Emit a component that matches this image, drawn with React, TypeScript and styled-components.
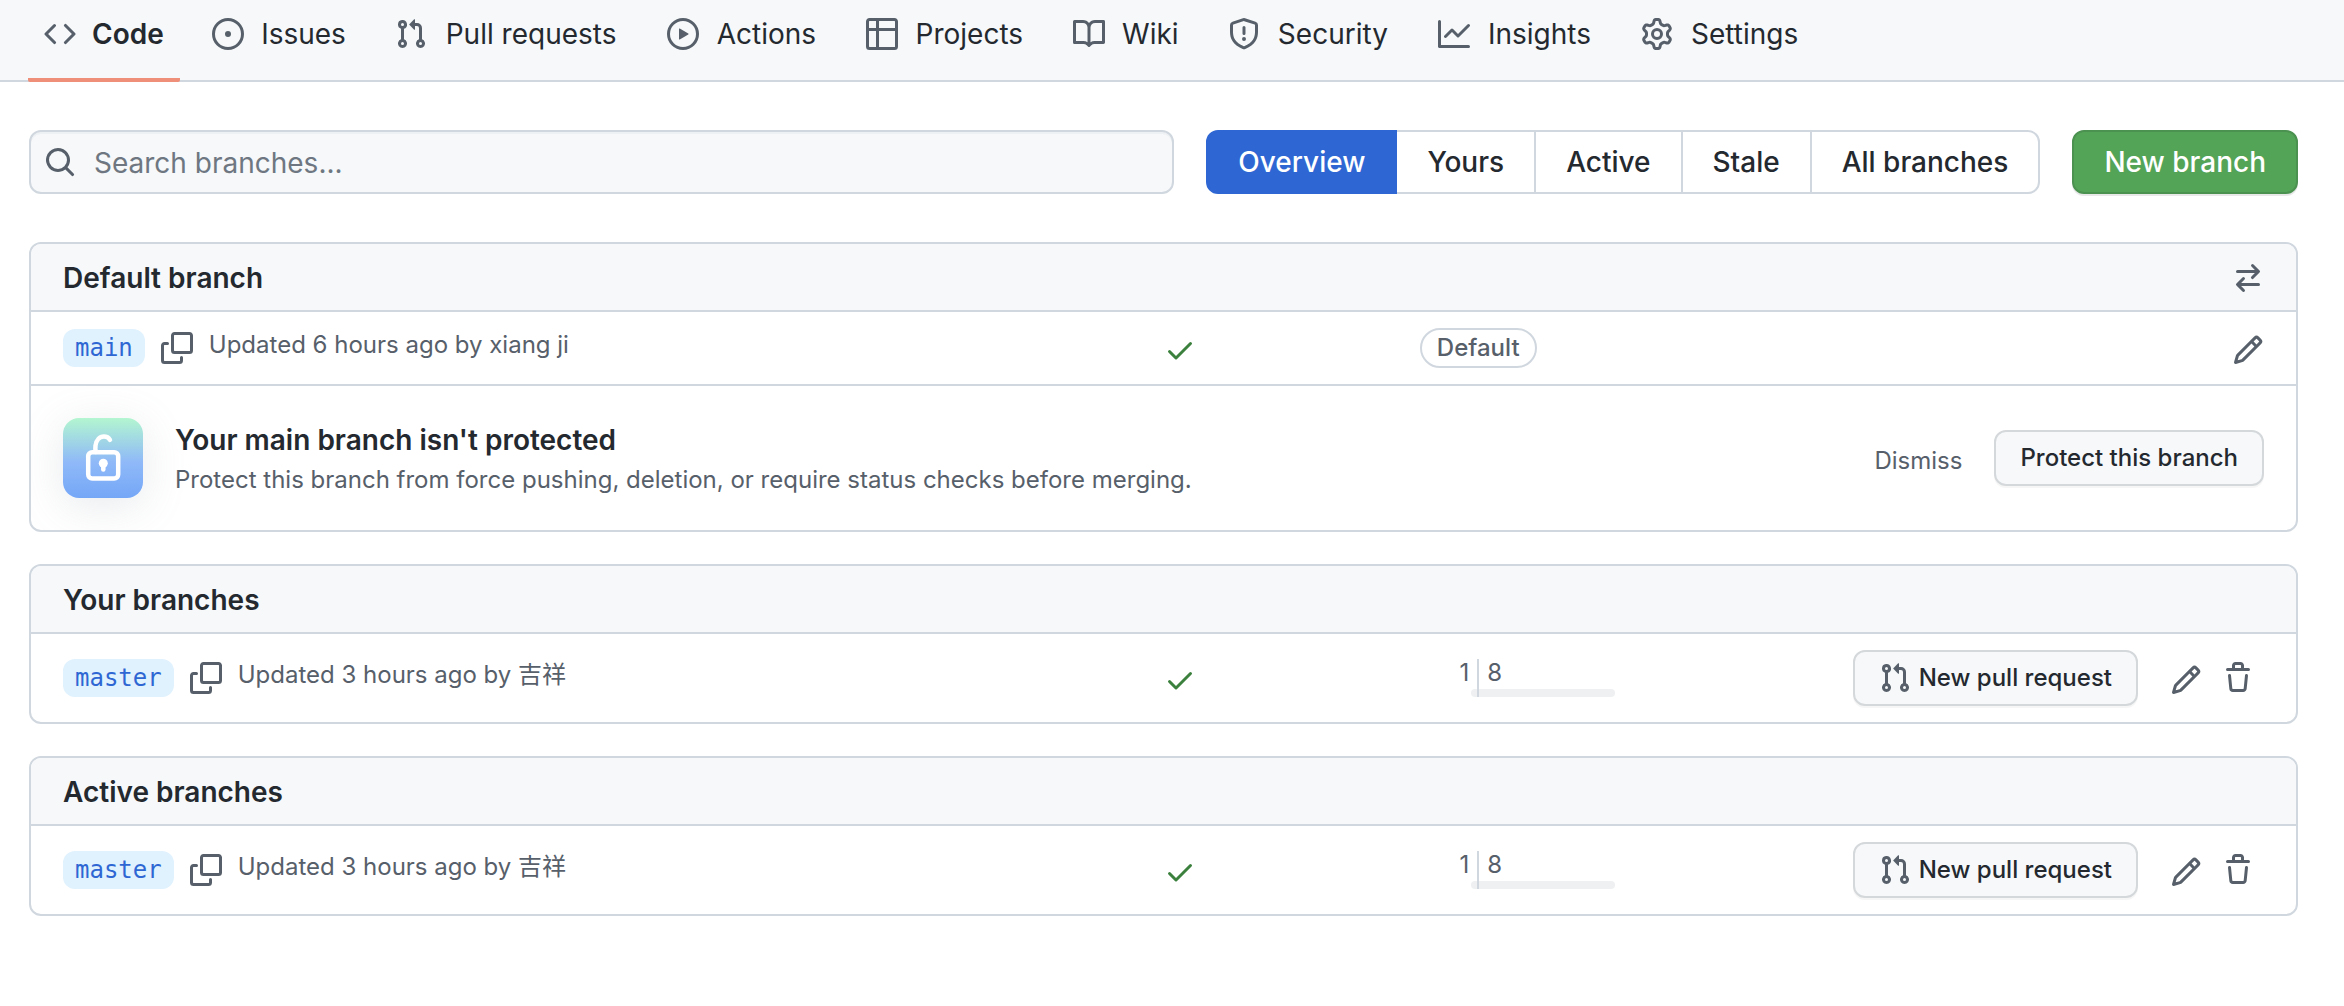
import React from "react";
import styled, { createGlobalStyle, css } from "styled-components";

const color = {
  fg: "#24292f",
  muted: "#57606a",
  border: "#d0d7de",
  subtle: "#f6f8fa",
  blue: "#2e67d3",
  green: "#54a457",
  check: "#3b803d",
};

const GlobalStyle = createGlobalStyle`
  *, *::before, *::after { box-sizing: border-box; }
  body {
    margin: 0;
    background: #fff;
    color: ${color.fg};
    font-family: Inter, "Noto Sans CJK SC", sans-serif;
    font-size: 24px;
    line-height: 36px;
  }
  button, input { font: inherit; color: inherit; margin: 0; }
`;

const paths = {
  code: "M4.72 3.22a.75.75 0 011.06 1.06L2.06 8l3.72 3.72a.75.75 0 11-1.06 1.06L.47 8.53a.75.75 0 010-1.06l4.25-4.25zm6.56 0a.75.75 0 10-1.06 1.06L13.94 8l-3.72 3.72a.75.75 0 101.06 1.06l4.25-4.25a.75.75 0 000-1.06l-4.25-4.25z",
  issue: "M8 9.5a1.5 1.5 0 100-3 1.5 1.5 0 000 3zM8 0a8 8 0 100 16A8 8 0 008 0zM1.5 8a6.5 6.5 0 1113 0 6.5 6.5 0 01-13 0z",
  pull: "M7.177 3.073L9.573.677A.25.25 0 0110 .854v4.792a.25.25 0 01-.427.177L7.177 3.427a.25.25 0 010-.354zM3.75 2.5a.75.75 0 100 1.5.75.75 0 000-1.5zm-2.25.75a2.25 2.25 0 113 2.122v5.256a2.251 2.251 0 11-1.5 0V5.372A2.25 2.25 0 011.5 3.25zM11 2.5h-1V4h1a1 1 0 011 1v5.628a2.251 2.251 0 101.5 0V5A2.5 2.5 0 0011 2.5zm1 10.25a.75.75 0 111.5 0 .75.75 0 01-1.5 0zM3.75 12a.75.75 0 100 1.5.75.75 0 000-1.5z",
  play: "M1.5 8a6.5 6.5 0 1113 0 6.5 6.5 0 01-13 0zM8 0a8 8 0 100 16A8 8 0 008 0zM6.379 5.227A.25.25 0 006 5.442v5.117a.25.25 0 00.379.214l4.264-2.559a.25.25 0 000-.428L6.379 5.227z",
  table: "M0 1.75C0 .784.784 0 1.75 0h12.5C15.216 0 16 .784 16 1.75v12.5A1.75 1.75 0 0114.25 16H1.75A1.75 1.75 0 010 14.25V1.75zM1.5 6.5v7.75c0 .138.112.25.25.25H5v-8H1.5zM5 5H1.5V1.75a.25.25 0 01.25-.25H5V5zm1.5 1.5v8h7.75a.25.25 0 00.25-.25V6.5h-8zm8-1.5h-8V1.5h7.75a.25.25 0 01.25.25V5z",
  book: "M0 1.75A.75.75 0 01.75 1h4.253c1.227 0 2.317.59 3 1.501A3.744 3.744 0 0111.006 1h4.245a.75.75 0 01.75.75v10.5a.75.75 0 01-.75.75h-4.507a2.25 2.25 0 00-1.591.659l-.622.621a.75.75 0 01-1.06 0l-.622-.621A2.25 2.25 0 005.258 13H.75a.75.75 0 01-.75-.75V1.75zm8.755 3a2.25 2.25 0 012.25-2.25H14.5v9h-3.757c-.71 0-1.4.201-1.992.572l.004-7.322zm-1.504 7.324l.004-5.073-.002-2.253A2.25 2.25 0 005.003 2.5H1.5v9h3.757a3.75 3.75 0 011.994.574z",
  shield: "M7.467.133a1.75 1.75 0 011.066 0l5.25 1.68A1.75 1.75 0 0115 3.48V7c0 1.566-.32 3.182-1.303 4.682-.983 1.498-2.585 2.813-5.032 3.855a1.7 1.7 0 01-1.33 0c-2.447-1.042-4.049-2.357-5.032-3.855C1.32 10.182 1 8.566 1 7V3.48a1.75 1.75 0 011.217-1.667l5.25-1.68zm.61 1.429a.25.25 0 00-.153 0l-5.25 1.68a.25.25 0 00-.174.238V7c0 1.358.275 2.666 1.057 3.86.784 1.194 2.121 2.34 4.366 3.297a.2.2 0 00.154 0c2.245-.956 3.582-2.104 4.366-3.298C13.225 9.666 13.5 8.36 13.5 7V3.48a.25.25 0 00-.174-.237l-5.25-1.68zM9 10.5a1 1 0 11-2 0 1 1 0 012 0zm-.25-5.75a.75.75 0 10-1.5 0v3a.75.75 0 001.5 0v-3z",
  graph: "M1.5 1.75a.75.75 0 00-1.5 0v12.5c0 .414.336.75.75.75h14.5a.75.75 0 000-1.5H1.5V1.75zm14.28 2.53a.75.75 0 00-1.06-1.06L10 7.94 7.53 5.47a.75.75 0 00-1.06 0L3.22 8.72a.75.75 0 001.06 1.06L7 7.06l2.47 2.47a.75.75 0 001.06 0l5.25-5.25z",
  gear: "M7.429 1.525a6.593 6.593 0 011.142 0c.036.003.108.036.137.146l.289 1.105c.147.56.55.967.997 1.189.174.086.341.183.501.29.417.278.97.423 1.53.27l1.102-.303c.11-.03.175.016.195.046.219.31.41.641.573.989.014.031.022.11-.059.19l-.815.806c-.411.406-.562.957-.53 1.456a4.588 4.588 0 010 .582c-.032.499.119 1.05.53 1.456l.815.806c.08.08.073.159.059.19a6.494 6.494 0 01-.573.99c-.02.029-.086.074-.195.045l-1.103-.303c-.559-.153-1.112-.008-1.529.27-.16.107-.327.204-.5.29-.449.222-.851.628-.998 1.189l-.289 1.105c-.029.11-.101.143-.137.146a6.613 6.613 0 01-1.142 0c-.036-.003-.108-.037-.137-.146l-.289-1.105c-.147-.56-.55-.967-.997-1.189a4.502 4.502 0 01-.501-.29c-.417-.278-.97-.423-1.53-.27l-1.102.303c-.11.03-.175-.016-.195-.046a6.492 6.492 0 01-.573-.989c-.014-.031-.022-.11.059-.19l.815-.806c.411-.406.562-.957.53-1.456a4.587 4.587 0 010-.582c.032-.499-.119-1.05-.53-1.456l-.815-.806c-.08-.08-.073-.159-.059-.19a6.44 6.44 0 01.573-.99c.02-.029.086-.075.195-.045l1.103.303c.559.153 1.112.008 1.529-.27.16-.107.327-.204.5-.29.449-.222.851-.628.998-1.189l.289-1.105c.029-.11.101-.143.137-.146zM8 0c-.236 0-.47.01-.701.03-.743.065-1.29.615-1.458 1.261l-.29 1.106c-.017.066-.078.158-.211.224a5.994 5.994 0 00-.668.386c-.123.082-.233.09-.3.071L3.27 2.776c-.644-.177-1.392.02-1.82.63a7.977 7.977 0 00-.704 1.217c-.315.675-.111 1.422.363 1.891l.815.806c.05.048.098.147.088.294a6.084 6.084 0 000 .772c.01.147-.038.246-.088.294l-.815.806c-.474.469-.678 1.216-.363 1.891.2.428.436.835.704 1.218.428.609 1.176.806 1.82.63l1.103-.303c.066-.019.176-.011.299.071.213.143.436.272.668.386.133.066.194.158.212.224l.289 1.106c.169.646.715 1.196 1.458 1.26a8.094 8.094 0 001.402 0c.743-.064 1.29-.614 1.458-1.26l.29-1.106c.017-.066.078-.158.211-.224a5.98 5.98 0 00.668-.386c.123-.082.233-.09.3-.071l1.102.302c.644.177 1.392-.02 1.82-.63.268-.382.505-.789.704-1.217.315-.675.111-1.422-.364-1.891l-.814-.806c-.05-.048-.098-.147-.088-.294a6.1 6.1 0 000-.772c-.01-.147.039-.246.088-.294l.814-.806c.475-.469.679-1.216.364-1.891a7.992 7.992 0 00-.704-1.218c-.428-.609-1.176-.806-1.82-.63l-1.103.303c-.066.019-.176.011-.299-.071a5.991 5.991 0 00-.668-.386c-.133-.066-.194-.158-.212-.224L10.16 1.29C9.99.645 9.444.095 8.701.031A8.094 8.094 0 008 0zm1.5 8a1.5 1.5 0 11-3 0 1.5 1.5 0 013 0zM11 8a3 3 0 11-6 0 3 3 0 016 0z",
  search: "M11.5 7a4.499 4.499 0 11-8.998 0A4.499 4.499 0 0111.5 7zm-.82 4.74a6 6 0 111.06-1.06l3.04 3.04a.75.75 0 11-1.06 1.06l-3.04-3.04z",
  copy: "M0 6.75C0 5.784.784 5 1.75 5h1.5a.75.75 0 010 1.5h-1.5a.25.25 0 00-.25.25v7.5c0 .138.112.25.25.25h7.5a.25.25 0 00.25-.25v-1.5a.75.75 0 011.5 0v1.5A1.75 1.75 0 019.25 16h-7.5A1.75 1.75 0 010 14.25v-7.5zM5 1.75C5 .784 5.784 0 6.75 0h7.5C15.216 0 16 .784 16 1.75v7.5A1.75 1.75 0 0114.25 11h-7.5A1.75 1.75 0 015 9.25v-7.5zm1.75-.25a.25.25 0 00-.25.25v7.5c0 .138.112.25.25.25h7.5a.25.25 0 00.25-.25v-7.5a.25.25 0 00-.25-.25h-7.5z",
  swap: "M5.22 14.78a.75.75 0 001.06-1.06L4.56 12h8.69a.75.75 0 000-1.5H4.56l1.72-1.72a.75.75 0 00-1.06-1.06l-3 3a.75.75 0 000 1.06l3 3zm5.56-6.5a.75.75 0 11-1.06-1.06l1.72-1.72H2.75a.75.75 0 010-1.5h8.69L9.72 2.28a.75.75 0 011.06-1.06l3 3a.75.75 0 010 1.06l-3 3z",
  pencil: "M11.013 1.427a1.75 1.75 0 012.474 0l1.086 1.086a1.75 1.75 0 010 2.474l-8.61 8.61c-.21.21-.47.364-.756.445l-3.251.93a.75.75 0 01-.927-.928l.929-3.25a1.75 1.75 0 01.445-.758l8.61-8.61zm1.414 1.06a.25.25 0 00-.354 0L10.811 3.75l1.439 1.44 1.263-1.263a.25.25 0 000-.354l-1.086-1.086zM11.189 6.25L9.75 4.81l-6.286 6.287a.25.25 0 00-.064.108l-.558 1.953 1.953-.558a.249.249 0 00.108-.064l6.286-6.286z",
  trash: "M6.5 1.75a.25.25 0 01.25-.25h2.5a.25.25 0 01.25.25V3h-3V1.75zm4.5 0V3h2.25a.75.75 0 010 1.5H2.75a.75.75 0 010-1.5H5V1.75C5 .784 5.784 0 6.75 0h2.5C10.216 0 11 .784 11 1.75zM4.496 6.675a.75.75 0 10-1.492.15l.66 6.6A1.75 1.75 0 005.405 15h5.19c.9 0 1.652-.681 1.741-1.576l.66-6.6a.75.75 0 00-1.492-.149l-.66 6.6a.25.25 0 01-.249.225h-5.19a.25.25 0 01-.249-.225l-.66-6.6z",
  check: "M13.78 4.22a.75.75 0 010 1.06l-7.25 7.25a.75.75 0 01-1.06 0L2.22 9.28a.75.75 0 011.06-1.06L6 10.94l6.72-6.72a.75.75 0 011.06 0z",
};

type IconName = keyof typeof paths;

const Svg = styled.svg`
  display: block;
  flex: none;
  width: 32px;
  height: 32px;
  fill: currentColor;
`;

const Icon = ({ name }: { name: IconName }) => (
  <Svg viewBox="0 0 16 16" aria-hidden="true">
    <path fillRule="evenodd" d={paths[name]} />
  </Svg>
);

const Nav = styled.nav`
  background: ${color.subtle};
  box-shadow: inset 0 -2px 0 ${color.border};
  padding: 0 28px;
`;

const Tabs = styled.ul`
  display: flex;
  gap: 16px;
  margin: 0;
  padding: 0;
  list-style: none;
`;

const Tab = styled.a<{ $selected?: boolean }>`
  display: flex;
  align-items: center;
  gap: 16px;
  padding: 14px 16px 24px;
  border-bottom: 4px solid ${(p) => (p.$selected ? "#ef8f79" : "transparent")};
  border-radius: 2px;
  color: ${color.muted};
  font-size: 28px;
  line-height: 40px;
  text-decoration: none;
`;

/* The hidden bold copy keeps a tab's width the same when it is selected. */
const TabLabel = styled.span<{ $selected?: boolean }>`
  display: grid;
  justify-items: center;
  color: ${color.fg};
  font-weight: ${(p) => (p.$selected ? 600 : 400)};
  &::after {
    content: attr(data-content);
    height: 0;
    overflow: hidden;
    visibility: hidden;
    font-weight: 600;
  }
`;

const Page = styled.main`
  display: flex;
  flex-direction: column;
  gap: 32px;
  padding: 48px 46px 48px 29px;
`;

const Toolbar = styled.div`
  display: flex;
  gap: 32px;
  margin-bottom: 16px;
`;

const SearchBox = styled.label`
  display: flex;
  flex: 1;
  align-items: center;
  gap: 18px;
  height: 64px;
  padding: 0 13px;
  border: 2px solid ${color.border};
  border-radius: 12px;
  background: ${color.subtle};
  box-shadow: inset 0 2px 0 rgba(208, 215, 222, 0.2);
  color: ${color.muted};
`;

const SearchInput = styled.input`
  flex: 1;
  min-width: 0;
  padding: 2px 0 0;
  border: 0;
  outline: 0;
  background: transparent;
  color: ${color.fg};
  font-size: 28px;
  line-height: 40px;
  &::placeholder { color: #6e7781; opacity: 1; }
`;

const Segments = styled.div`
  display: flex;
`;

const Segment = styled.a<{ $selected?: boolean }>`
  padding: 10px 30px;
  border: 2px solid ${color.border};
  margin-left: -2px;
  color: ${color.fg};
  font-size: 28px;
  font-weight: 500;
  line-height: 40px;
  text-decoration: none;
  white-space: nowrap;
  &:first-child { margin-left: 0; border-radius: 12px 0 0 12px; }
  &:last-child { border-radius: 0 12px 12px 0; }
  ${(p) =>
    p.$selected &&
    css`
      z-index: 1;
      border-color: ${color.blue};
      background: ${color.blue};
      color: #fff;
    `}
`;

const PrimaryButton = styled.button`
  height: 64px;
  padding: 0 30px;
  border: 2px solid #4b9150;
  border-radius: 12px;
  background: ${color.green};
  box-shadow: 0 2px 0 rgba(27, 31, 36, 0.1);
  color: #fff;
  font-size: 28px;
  font-weight: 500;
  line-height: 40px;
  white-space: nowrap;
`;

const Card = styled.section`
  overflow: hidden;
  border: 2px solid ${color.border};
  border-radius: 12px;
`;

const CardHeader = styled.header`
  display: flex;
  align-items: center;
  justify-content: space-between;
  height: 68px;
  padding: 2px 32px 0;
  border-bottom: 2px solid ${color.border};
  background: ${color.subtle};
`;

const CardTitle = styled.h2`
  margin: 0;
  font-size: 28px;
  font-weight: 600;
  line-height: 40px;
`;

const Row = styled.div<{ $compact?: boolean }>`
  display: grid;
  grid-template-columns: minmax(0, 500fr) minmax(0, 40fr) minmax(0, 206fr) minmax(0, 254fr);
  align-items: center;
  min-height: ${(p) => (p.$compact ? 72 : 88)}px;
  padding: 0 32px;
`;

const NameCell = styled.div`
  display: flex;
  align-items: center;
  gap: 16px;
`;

const BranchLink = styled.a`
  padding: 1px 12px;
  border-radius: 12px;
  background: #e0f2fe;
  color: ${color.blue};
  font-family: "DejaVu Sans Mono", monospace;
  font-size: 24px;
  line-height: 36px;
  text-decoration: none;
`;

const Updated = styled.span`
  padding-bottom: 6px;
  color: ${color.muted};
`;

const IconButton = styled.button<{ $padded?: boolean }>`
  display: block;
  padding: 0 ${(p) => (p.$padded ? 10 : 0)}px;
  border: 0;
  background: none;
  color: ${color.muted};
`;

const Lowered = styled.div`
  padding-top: 4px;
`;

const CheckCell = styled(Lowered)`
  color: ${color.check};
`;

const CenterCell = styled.div`
  display: flex;
  justify-content: center;
`;

const Pill = styled.span`
  padding: 0 15px;
  border: 2px solid ${color.border};
  border-radius: 20px;
  color: ${color.muted};
  font-weight: 500;
`;

const Divergence = styled.div`
  display: grid;
  grid-template-columns: 136px 2px 136px;
  grid-template-rows: 30px 8px;
  color: ${color.muted};
  line-height: 28px;
`;

const Count = styled.span<{ $behind?: boolean }>`
  grid-row: 1;
  grid-column: ${(p) => (p.$behind ? 1 : 3)};
  padding: 0 8px;
  text-align: ${(p) => (p.$behind ? "right" : "left")};
`;

const Divider = styled.span`
  grid-row: 1 / 3;
  grid-column: 2;
  z-index: 1;
  background: ${color.border};
`;

const Bar = styled.span`
  grid-row: 2;
  grid-column: 3;
  margin-left: -8px;
  border-radius: 4px;
  background: #eef0f2;
`;

const Actions = styled.div`
  display: flex;
  align-items: center;
  justify-content: flex-end;
`;

const Button = styled.button`
  display: flex;
  align-items: center;
  gap: 8px;
  height: 56px;
  padding: 0 24px;
  border: 2px solid #d5d8da;
  border-radius: 12px;
  background: ${color.subtle};
  box-shadow: 0 2px 0 rgba(27, 31, 36, 0.04);
  font-weight: 500;
  white-space: nowrap;
  svg { color: ${color.muted}; }
`;

const EditTools = styled.div`
  display: flex;
  align-items: center;
  margin-left: 22px;
`;

const Notice = styled.div`
  display: flex;
  align-items: center;
  gap: 32px;
  padding: 32px;
  border-top: 2px solid ${color.border};
`;

const LockTile = styled.div`
  flex: none;
  width: 80px;
  height: 80px;
  border-radius: 16px;
  background: linear-gradient(180deg, #b3f6d0 0%, #8fb9f8 55%, #75a7f7 100%);
  box-shadow: 0 8px 44px rgba(140, 149, 159, 0.2);
  svg { width: 80px; height: 80px; }
`;

const NoticeText = styled.div`
  flex: 1;
`;

const NoticeTitle = styled.h3`
  margin: 0;
  font-size: 28px;
  font-weight: 600;
  line-height: 44px;
`;

const NoticeBody = styled.p`
  margin: 0;
  color: ${color.muted};
`;

const LinkButton = styled.button`
  padding: 6px 0 0;
  border: 0;
  background: none;
  color: ${color.muted};
`;

const tabs: { icon: IconName; label: string }[] = [
  { icon: "code", label: "Code" },
  { icon: "issue", label: "Issues" },
  { icon: "pull", label: "Pull requests" },
  { icon: "play", label: "Actions" },
  { icon: "table", label: "Projects" },
  { icon: "book", label: "Wiki" },
  { icon: "shield", label: "Security" },
  { icon: "graph", label: "Insights" },
  { icon: "gear", label: "Settings" },
];

const filters = ["Overview", "Yours", "Active", "Stale", "All branches"];

const BranchName = ({ name, updated }: { name: string; updated: string }) => (
  <NameCell>
    <BranchLink href="#">{name}</BranchLink>
    <IconButton aria-label="Copy branch name">
      <Icon name="copy" />
    </IconButton>
    <Updated>{updated}</Updated>
  </NameCell>
);

const BranchCard = ({ title }: { title: string }) => (
  <Card>
    <CardHeader>
      <CardTitle>{title}</CardTitle>
    </CardHeader>
    <Row>
      <BranchName name="master" updated="Updated 3 hours ago by 吉祥" />
      <CheckCell>
        <Icon name="check" />
      </CheckCell>
      <CenterCell>
        <Divergence>
          <Count $behind>1</Count>
          <Divider />
          <Count>8</Count>
          <Bar />
        </Divergence>
      </CenterCell>
      <Actions>
        <Button>
          <Icon name="pull" />
          New pull request
        </Button>
        <EditTools>
          <Lowered>
            <IconButton $padded aria-label="Rename branch">
              <Icon name="pencil" />
            </IconButton>
          </Lowered>
          <IconButton $padded aria-label="Delete branch">
            <Icon name="trash" />
          </IconButton>
        </EditTools>
      </Actions>
    </Row>
  </Card>
);

export default function App() {
  return (
    <>
      <GlobalStyle />
      <Nav>
        <Tabs>
          {tabs.map((tab, i) => (
            <li key={tab.label}>
              <Tab href="#" $selected={i === 0}>
                <Icon name={tab.icon} />
                <TabLabel data-content={tab.label} $selected={i === 0}>
                  {tab.label}
                </TabLabel>
              </Tab>
            </li>
          ))}
        </Tabs>
      </Nav>
      <Page>
        <Toolbar>
          <SearchBox>
            <Icon name="search" />
            <SearchInput type="text" placeholder="Search branches..." aria-label="Search branches" />
          </SearchBox>
          <Segments>
            {filters.map((label, i) => (
              <Segment key={label} href="#" $selected={i === 0}>
                {label}
              </Segment>
            ))}
          </Segments>
          <PrimaryButton>New branch</PrimaryButton>
        </Toolbar>
        <Card>
          <CardHeader>
            <CardTitle>Default branch</CardTitle>
            <IconButton aria-label="Switch default branch">
              <Icon name="swap" />
            </IconButton>
          </CardHeader>
          <Row $compact>
            <BranchName name="main" updated="Updated 6 hours ago by xiang ji" />
            <CheckCell>
              <Icon name="check" />
            </CheckCell>
            <CenterCell>
              <Pill>Default</Pill>
            </CenterCell>
            <Actions>
              <Lowered>
                <IconButton aria-label="Rename branch">
                  <Icon name="pencil" />
                </IconButton>
              </Lowered>
            </Actions>
          </Row>
          <Notice>
            <LockTile>
              <Svg viewBox="0 0 80 80" aria-hidden="true">
                <rect x="25.2" y="34.2" width="30" height="26.400" rx="4" fill="none" stroke="#fff" strokeWidth="4.500" />
                <path d="M33 34c-.7-2-.9-4-.5-6.500.8-5.500 4-9 8.500-9 2.800 0 4.800 1.300 6 3.300" fill="none" stroke="#fff" strokeWidth="4.500" strokeLinecap="round" />
                <circle cx="40.300" cy="45.300" r="4.500" fill="#fff" />
                <path d="M40.300 46v5.500" fill="none" stroke="#fff" strokeWidth="4.500" strokeLinecap="round" />
              </Svg>
            </LockTile>
            <NoticeText>
              <NoticeTitle>Your main branch isn't protected</NoticeTitle>
              <NoticeBody>
                Protect this branch from force pushing, deletion, or require status checks before merging.
              </NoticeBody>
            </NoticeText>
            <LinkButton>Dismiss</LinkButton>
            <Button>Protect this branch</Button>
          </Notice>
        </Card>
        <BranchCard title="Your branches" />
        <BranchCard title="Active branches" />
      </Page>
    </>
  );
}
